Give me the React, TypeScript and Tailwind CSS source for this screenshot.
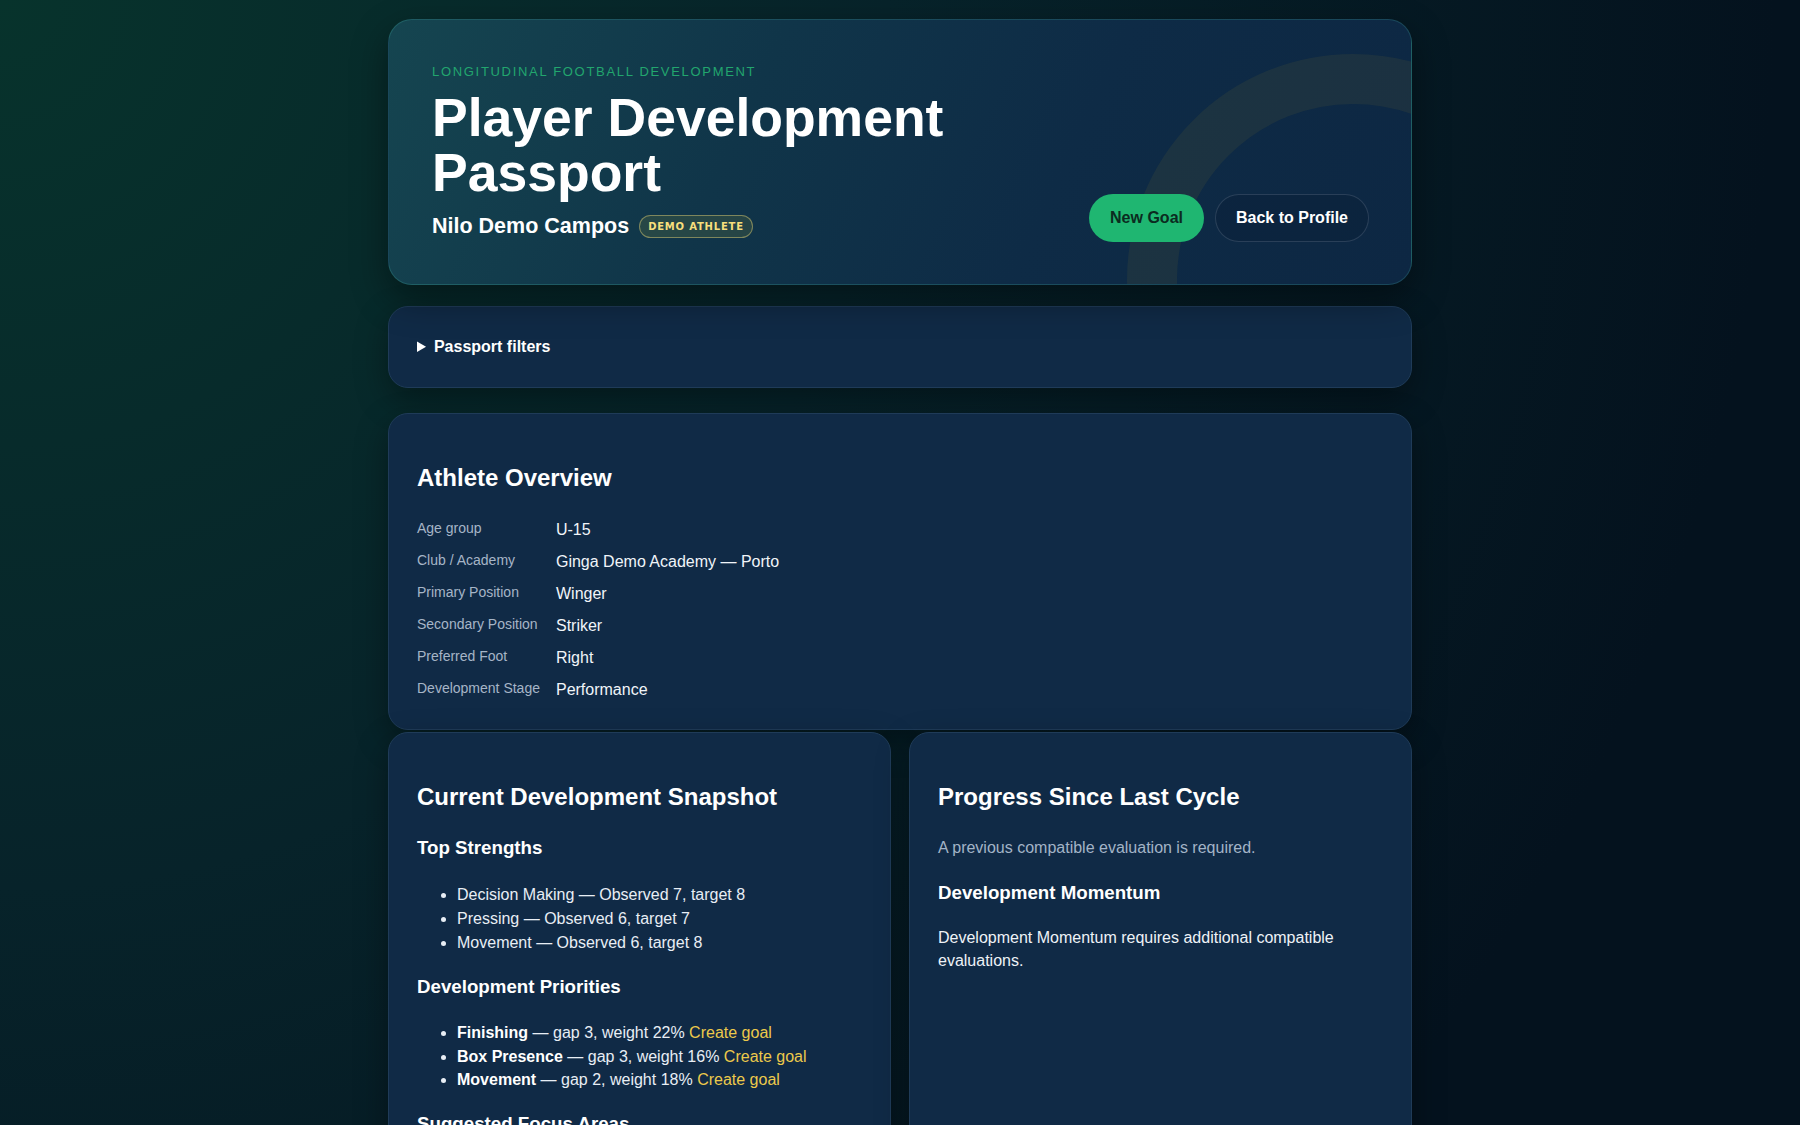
import React from "react";

function Card({ className = "", children }: { className?: string; children: React.ReactNode }) {
  return (
    <section
      className={
        "rounded-[20px] border border-[#1f3b58] bg-[#102a46] shadow-[0_12px_32px_rgba(0,0,0,0.35)] " +
        className
      }
    >
      {children}
    </section>
  );
}

export default function App() {
  return (
    <div className="min-h-screen w-full bg-[radial-gradient(circle_at_0%_0%,#07332c_0%,#07232a_40%,#04121e_80%)] font-['Liberation_Sans',Arial,sans-serif] text-[#e8eef5]">
      <div className="mx-auto w-[1024px] pt-[19px]">
        {/* Hero */}
        <header className="relative overflow-hidden rounded-3xl border border-[rgba(94,234,212,0.16)] bg-[linear-gradient(115deg,#154550_0%,#103549_35%,#0e2b46_65%,#0d2743_100%)] py-11 pl-[43px] pr-11 shadow-[0_14px_36px_rgba(0,0,0,0.4)]">
          <div className="pointer-events-none absolute left-[738px] top-[34px] h-[452px] w-[452px] rounded-full border-[50px] border-[rgba(250,204,21,0.06)]" />
          <div className="relative z-10 flex items-end justify-between">
            <div>
              <div className="mt-[-1px] text-[13px] uppercase leading-[17px] tracking-[0.13em] text-[#22a66e]">
                Longitudinal Football Development
              </div>
              <h1 className="mt-[10px] max-w-[560px] text-[53.5px] font-bold leading-[55px] text-white">
                Player Development Passport
              </h1>
              <div className="mt-3 flex items-center gap-[10px]">
                <span className="text-[21.5px] font-bold leading-[28px] text-white">Nilo Demo Campos</span>
                <span className="inline-flex h-[23px] items-center rounded-full border border-[rgba(234,214,120,0.45)] bg-[rgba(120,130,60,0.22)] px-[8px] font-['DejaVu_Sans',sans-serif] text-[10px] font-bold tracking-[0.08em] text-[#f7df7c]">
                  DEMO ATHLETE
                </span>
              </div>
            </div>
            <div className="mb-[-2px] mr-[-2px] flex items-center gap-[11px]">
              <button className="h-[48px] rounded-full border border-transparent bg-[#1fb671] px-5 text-base font-bold text-[#0b2b20]">
                New Goal
              </button>
              <button className="h-[48px] rounded-full border border-[rgba(148,163,184,0.22)] bg-[rgba(10,30,52,0.35)] px-5 text-base font-bold text-white">
                Back to Profile
              </button>
            </div>
          </div>
        </header>

        {/* Filters */}
        <Card className="mt-[21px] p-7">
          <details>
            <summary className="cursor-pointer text-base font-bold leading-6 text-white">Passport filters</summary>
          </details>
        </Card>

        {/* Athlete overview */}
        <Card className="mt-[25px] px-7 pt-7 pb-[27px]">
          <h2 className="mt-[18px] text-2xl font-bold leading-[36px] text-white">Athlete Overview</h2>
          <dl className="mt-[22px] grid grid-cols-[max-content_1fr] gap-x-4 gap-y-2">
            {[
              ["Age group", "U-15"],
              ["Club / Academy", "Ginga Demo Academy — Porto"],
              ["Primary Position", "Winger"],
              ["Secondary Position", "Striker"],
              ["Preferred Foot", "Right"],
              ["Development Stage", "Performance"],
            ].map(([k, v]) => (
              <React.Fragment key={k}>
                <dt className="text-sm leading-5 text-[#a6b5c7]">{k}</dt>
                <dd className="text-base leading-6 text-[#f1f5f9]">{v}</dd>
              </React.Fragment>
            ))}
          </dl>
        </Card>

        {/* Two columns */}
        <div className="mt-[2px] grid grid-cols-2 gap-[18px] pb-10">
          <Card className="p-7">
            <h2 className="mt-[18px] text-2xl font-bold leading-[36px] text-white">Current Development Snapshot</h2>
            <h3 className="mt-[19px] text-[18.72px] font-bold leading-[28px] text-white">Top Strengths</h3>
            <ul className="mt-[21px] list-disc pl-10 text-base leading-6">
              <li>Decision Making — Observed 7, target 8</li>
              <li>Pressing — Observed 6, target 7</li>
              <li>Movement — Observed 6, target 8</li>
            </ul>
            <h3 className="mt-[18px] text-[18.72px] font-bold leading-[28px] text-white">Development Priorities</h3>
            <ul className="mt-[20px] list-disc pl-10 text-base leading-[23.5px]">
              <li>
                <strong className="font-bold text-white">Finishing</strong> — gap 3, weight 22%{" "}
                <a className="text-[#ecc94b]" href="#">Create goal</a>
              </li>
              <li>
                <strong className="font-bold text-white">Box Presence</strong> — gap 3, weight 16%{" "}
                <a className="text-[#ecc94b]" href="#">Create goal</a>
              </li>
              <li>
                <strong className="font-bold text-white">Movement</strong> — gap 2, weight 18%{" "}
                <a className="text-[#ecc94b]" href="#">Create goal</a>
              </li>
            </ul>
            <h3 className="mt-[18px] text-[18.72px] font-bold leading-[28px] text-white">Suggested Focus Areas</h3>
            <ul className="mt-[19px] list-disc pl-10 text-base leading-6">
              <li>Finishing under pressure in the box</li>
              <li>Late runs and box presence</li>
              <li>Off-ball movement timing</li>
            </ul>
          </Card>
          <Card className="p-7">
            <h2 className="mt-[18px] text-2xl font-bold leading-[36px] text-white">Progress Since Last Cycle</h2>
            <p className="mt-[21px] text-base leading-6 text-[#a3b4c7]">A previous compatible evaluation is required.</p>
            <h3 className="mt-[19px] text-[18.72px] font-bold leading-[28px] text-white">Development Momentum</h3>
            <p className="mt-[19px] text-base leading-[23px] text-[#eef2f7]">
              Development Momentum requires additional compatible evaluations.
            </p>
          </Card>
        </div>
      </div>
    </div>
  );
}
